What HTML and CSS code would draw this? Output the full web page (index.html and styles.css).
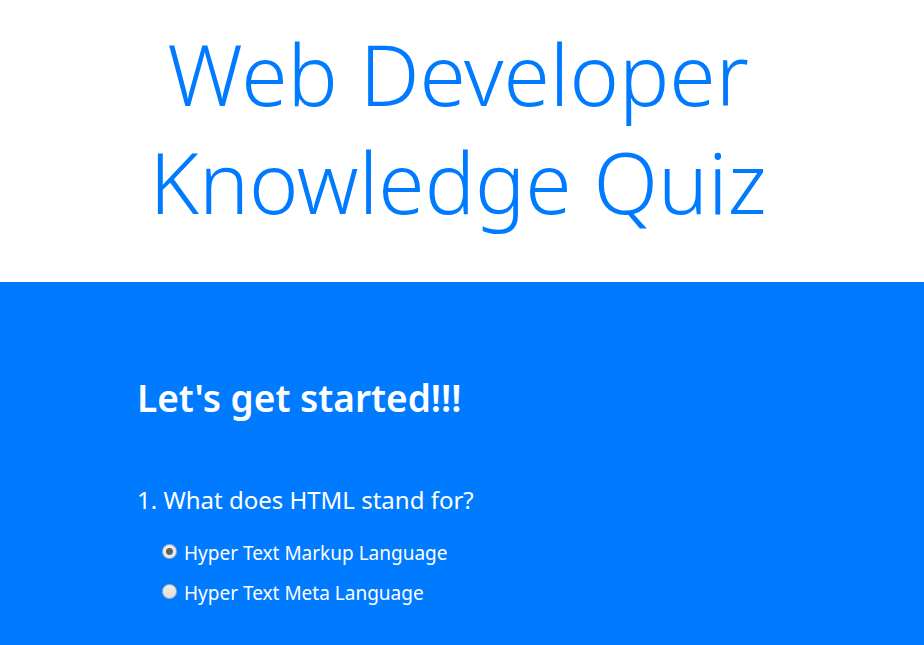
FILE: index.html
```html
<!DOCTYPE html>
<html lang="en">
<head>
<meta charset="utf-8">
<meta name="viewport" content="width=device-width, initial-scale=1">
<title>Web Developer Knowledge Quiz</title>
<link rel="stylesheet" href="styles.css">
</head>
<body>
<header class="hero">
  <h1 class="hero-title">Web Developer Knowledge Quiz</h1>
</header>
<main class="quiz">
  <form class="quiz-form">
    <h2 class="quiz-heading">Let's get started!!!</h2>
    <fieldset class="question">
      <legend class="question-text">1. What does HTML stand for?</legend>
      <label class="answer"><input class="answer-radio" type="radio" name="q1" value="markup" checked><span>Hyper Text Markup Language</span></label>
      <label class="answer"><input class="answer-radio" type="radio" name="q1" value="meta"><span>Hyper Text Meta Language</span></label>
    </fieldset>
  </form>
</main>
</body>
</html>
```
FILE: styles.css
```css
* {
  box-sizing: border-box;
}

body {
  margin: 0;
  min-height: 100vh;
  display: flex;
  flex-direction: column;
  background: #fff;
  font-family: "Segoe UI", "Noto Sans", "Open Sans", sans-serif;
}

.hero {
  padding: 20px 116px 46px 108px;
  text-align: center;
}

.hero-title {
  margin: 0;
  color: #007bff;
  font-size: 84px;
  font-weight: 300;
  line-height: 108px;
}

.quiz {
  flex: 1;
  padding: 88px 138px 32px 137px;
  background: #007bff;
  color: #fff;
}

.quiz-heading {
  margin: 0 0 58px;
  font-size: 37px;
  font-weight: 600;
  line-height: 56px;
}

.question {
  margin: 0;
  padding: 0;
  border: 0;
}

.question-text {
  padding: 0;
  margin-bottom: 17px;
  font-size: 24px;
  font-weight: 400;
  line-height: 32px;
}

.answer {
  display: flex;
  align-items: center;
  gap: 7px;
  margin-left: 25px;
  font-size: 19px;
  line-height: 40px;
}

.answer-radio {
  appearance: none;
  flex: none;
  width: 15px;
  height: 15px;
  margin: 0 0 4px;
  border: 1px solid #b0b0b0;
  border-radius: 50%;
  background: linear-gradient(#eee, #ddd);
}

.answer-radio:checked {
  background: radial-gradient(circle, #606060 3px, #ebebeb 4px);
}
```
